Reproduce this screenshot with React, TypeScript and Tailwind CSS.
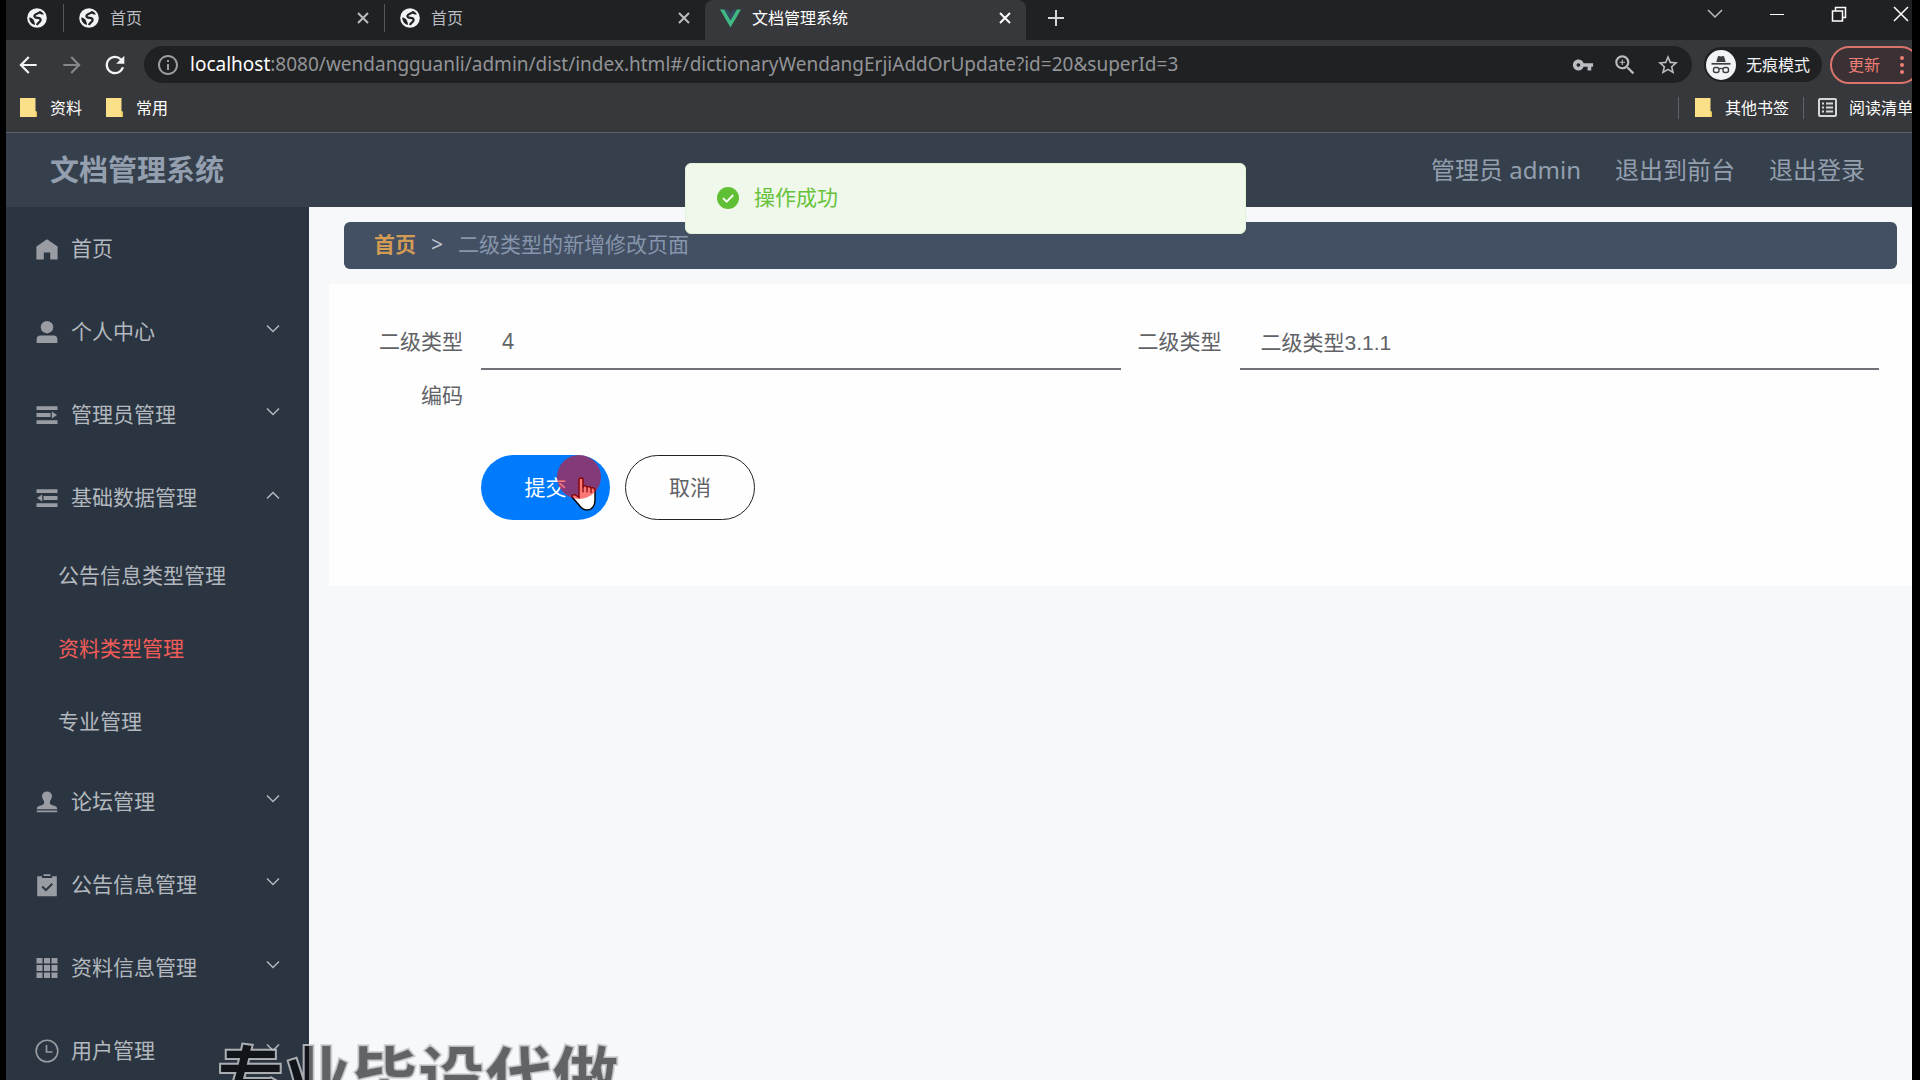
import type { ReactNode } from "react";
import {
  MdArrowBack,
  MdArrowForward,
  MdInfoOutline,
  MdRefresh,
  MdStarBorder,
  MdVpnKey,
  MdZoomIn,
} from "react-icons/md";

/* ---------- icons ---------- */

const MenuSvg = ({ children }: { children: ReactNode }) => (
  <svg viewBox="0 0 24 24" className="size-6 shrink-0" fill="currentColor" aria-hidden="true">
    {children}
  </svg>
);

const HomeIcon = () => (
  <MenuSvg>
    <path d="M12 2.2 22.6 9.6V22.6H15.2V15.4H8.8V22.6H1.4V9.6Z" />
  </MenuSvg>
);

const UserIcon = () => (
  <MenuSvg>
    <circle cx="12" cy="7.2" r="6.2" />
    <path d="M1.6 23V19.4A4 4 0 0 1 5.6 15.4H18.4A4 4 0 0 1 22.4 19.4V23Z" />
  </MenuSvg>
);

const UnfoldIcon = () => (
  <MenuSvg>
    <path d="M1.5 3.3h21v3.8h-21zM1.5 10.1h14v3.8h-14zM1.5 17.2h21v3.8h-21zM16.8 8.6 22 12l-5.2 3.4z" />
  </MenuSvg>
);

const FoldIcon = () => (
  <MenuSvg>
    <path d="M1.5 3.3h21v3.8h-21zM8.5 10.1h14v3.8h-14zM1.5 17.2h21v3.8h-21zM7.2 8.6 2 12l5.2 3.4z" />
  </MenuSvg>
);

const StampIcon = () => (
  <MenuSvg>
    <path d="M12 1.4a5 5 0 0 1 5 5c0 2.2-2.2 3.8-2.2 6.2 0 1.8 1.4 2.6 4.4 3.2 2.2.5 3 1.6 3 3.4H1.8c0-1.8.8-2.9 3-3.4 3-.6 4.4-1.4 4.4-3.2C9.200 10.2 7 8.6 7 6.4a5 5 0 0 1 5-5ZM1.8 20.600h20.4v1.700H1.800z" />
  </MenuSvg>
);

const ClaimIcon = () => (
  <MenuSvg>
    <path
      fillRule="evenodd"
      d="M8.5 3V1.2h7V3zM2.2 3.2h4.8V5h10V3.2h4.8V23.2H2.2zM10.9 18.6 18 11.5l-1.4-1.4-5.7 5.7-3-3-1.4 1.4z"
    />
  </MenuSvg>
);

const GridIcon = () => (
  <MenuSvg>
    <path d="M1.5 2h6v5.4h-6zM9 2h6v5.4H9zM16.5 2h6v5.4h-6zM1.5 9h6v6h-6zM9 9h6v6H9zM16.5 9h6v6h-6zM1.5 16.6h6V22h-6zM9 16.6h6V22H9zM16.5 16.6h6V22h-6z" />
  </MenuSvg>
);

const ClockIcon = () => (
  <MenuSvg>
    <circle cx="12" cy="12" r="10.8" fill="none" stroke="currentColor" strokeWidth="1.6" />
    <path d="M11.5 6v7h6" fill="none" stroke="currentColor" strokeWidth="1.6" />
  </MenuSvg>
);

const Chevron = ({ up }: { up?: boolean }) => (
  <svg viewBox="0 0 16 10" className="mb-[6px] h-[10px] w-4" fill="none" stroke="currentColor" strokeWidth="1.5" aria-hidden="true">
    <path d={up ? "M2 8.5 8 2.5l6 6" : "M2 1.5 8 7.5l6-6"} />
  </svg>
);

const Favicon = () => (
  <svg viewBox="0 0 20 20" className="size-5" fill="none" aria-hidden="true">
    <circle cx="10" cy="10" r="9.8" fill="#f1f3f4" />
    <path
      d="M13.5 3.500C12.500 5.500 8.500 5.500 7.500 7.500c-.6 1.600 1 2.200 3 2.300 2.200.1 3.700 1 3 2.900-.6 1.600-2.600 1.800-3.600 4.300"
      stroke="#202123"
      strokeWidth="2.200"
    />
    <path d="M2.200 9.500c2 0 4.300 1.300 4.800 3.200.3 1.400 1 2 1 4.300-3.500-.8-5.800-4-5.800-7.500Z" fill="#202123" />
    <path d="M12.500 3.200c2 .2 3.600 1.600 4.400 3.300-1.800.4-3.200-.2-4.600-1.300z" fill="#202123" />
  </svg>
);

const VueIcon = () => (
  <svg viewBox="0 0 22 19" className="h-[19px] w-[21px]" aria-hidden="true">
    <path d="M0 0h4.5L11 11.4 17.5 0H22L11 19Z" fill="#41b883" />
    <path d="M4.5 0h4L11 4.4 13.5 0h4L11 11.4Z" fill="#35495e" />
  </svg>
);

const CloseIcon = () => (
  <svg viewBox="0 0 12 12" className="size-3" fill="none" stroke="currentColor" strokeWidth="2" aria-hidden="true">
    <path d="M1 1l10 10M11 1 1 11" />
  </svg>
);

const FolderIcon = () => (
  <svg viewBox="0 0 17 19" className="h-[19px] w-[17px]" aria-hidden="true">
    <path d="M0 0h15.5v13l1.5 1v5H0z" fill="#fbe08a" />
    <path d="M15.5 13v6H17v-5z" fill="#e8c455" />
  </svg>
);

const IncognitoIcon = () => (
  <svg viewBox="0 0 30 30" className="size-[30px]" fill="none" aria-hidden="true">
    <circle cx="15" cy="15" r="15" fill="#f1f3f4" />
    <path d="M10.3 12 11.800 6.800c.2-.7.8-1 1.4-.8l1.800.4 1.800-.4c.6-.2 1.200.1 1.400.8L19.700 12z" fill="#3c4043" />
    <path d="M5.500 13.800h19" stroke="#3c4043" strokeWidth="1.700" />
    <rect x="7.500" y="17.500" width="5.500" height="5" rx="2" stroke="#3c4043" strokeWidth="1.400" />
    <rect x="17" y="17.500" width="5.500" height="5" rx="2" stroke="#3c4043" strokeWidth="1.400" />
    <path d="M13 19c1.200-.7 2.800-.7 4 0" stroke="#3c4043" strokeWidth="1.300" />
  </svg>
);

const ReadingListIcon = () => (
  <svg viewBox="0 0 19 19" className="size-[19px]" fill="none" stroke="#d5d7da" strokeWidth="2" aria-hidden="true">
    <rect x="1" y="1" width="17" height="17" rx="1" />
    <path d="M4 5.500h2M4 9.500h2M4 13.500h2M8 5.500h7M8 9.500h7M8 13.500h7" />
  </svg>
);

const HandCursor = () => (
  <svg viewBox="0 0 26 34" className="absolute top-[22px] left-[90px] h-[34px] w-[26px]" aria-hidden="true">
    <path
      d="M8 2.500c0-2 4-2 4 0V9.500c1-1 3.500-.8 4 .7 1-1 3.500-.6 4 .9 1-.8 4-.4 4 1.900V23c0 5-2.500 10-8 10-4 0-6-2-8-5L1.500 20.500c-1-2 1-3.500 3-2.500L8 20.500z"
      fill="#fff"
      stroke="#000"
      strokeWidth="1.400"
    />
    <path d="M12 9.500v6M16 10.500v5M20 11.500v4.500" stroke="#000" strokeWidth="1.200" />
  </svg>
);

/* ---------- browser window ---------- */

const Tab = ({ title, icon, active }: { title: string; icon: ReactNode; active?: boolean }) => (
  <div
    className={
      active
        ? "flex h-10 w-[321px] items-center rounded-t-lg bg-[#37383b] px-[15px] pb-1 text-white"
        : "flex h-10 w-[320px] items-center px-[15px] pb-1 text-[#b9bcc0]"
    }
  >
    {icon}
    <span className="flex-1 pl-[11px]">{title}</span>
    <button aria-label="关闭标签页">
      <CloseIcon />
    </button>
  </div>
);

const TabDivider = () => <div className="mt-1 h-7 w-px bg-[#55585c]" />;

const TabStrip = () => (
  <div className="flex h-10 bg-[#202123]">
    <div className="flex w-[57px] items-center justify-end pr-4 pb-1">
      <Favicon />
    </div>
    <TabDivider />
    <Tab title="首页" icon={<Favicon />} />
    <TabDivider />
    <Tab title="首页" icon={<Favicon />} />
    <Tab title="文档管理系统" icon={<VueIcon />} active />
    <button aria-label="新标签页" className="ml-[21px] pb-1 text-[#d5d7da]">
      <svg viewBox="0 0 18 18" className="size-[18px]" fill="none" stroke="currentColor" strokeWidth="2">
        <path d="M9 1v16M1 9h16" />
      </svg>
    </button>
    <div className="ml-auto flex h-7 items-center gap-[46px] pr-[3px] text-white">
      <button aria-label="搜索标签页">
        <svg viewBox="0 0 16 10" className="h-[10px] w-4 text-[#b9bcc0]" fill="none" stroke="currentColor" strokeWidth="1.5">
          <path d="M1 1l7 7 7-7" />
        </svg>
      </button>
      <button aria-label="最小化">
        <svg viewBox="0 0 16 16" className="size-4" fill="none" stroke="currentColor">
          <path d="M1 8.5h14" />
        </svg>
      </button>
      <button aria-label="还原">
        <svg viewBox="0 0 16 16" className="size-4" fill="none" stroke="currentColor" strokeWidth="1.5">
          <path d="M1.5 5h10v10h-10zM4.5 4.5V1.500h10v10h-3" />
        </svg>
      </button>
      <button aria-label="关闭">
        <svg viewBox="0 0 16 16" className="size-4" fill="none" stroke="currentColor" strokeWidth="1.5">
          <path d="M1 1l14 14M15 1 1 15" />
        </svg>
      </button>
    </div>
  </div>
);

const Toolbar = () => (
  <div className="flex h-[49px] items-center pl-[9px] text-[#f1f3f4]">
    <button aria-label="后退">
      <MdArrowBack className="size-[26px]" />
    </button>
    <button aria-label="前进" className="ml-[18px] text-[#85878a]">
      <MdArrowForward className="size-[26px]" />
    </button>
    <button aria-label="重新加载" className="ml-4">
      <MdRefresh className="size-7" />
    </button>
    <div className="ml-[15px] flex h-[37px] flex-1 items-center rounded-full bg-[#202123] px-3 text-[#b9bcc0]">
      <MdInfoOutline className="size-6 text-[#9a9da1]" />
      <div role="textbox" aria-label="地址栏" className="ml-[10px] flex-1 text-[19px] whitespace-nowrap text-[#929497]">
        <span className="text-white">localhost</span>
        :8080/wendangguanli/admin/dist/index.html#/dictionaryWendangErjiAddOrUpdate?id=20&amp;superId=3
      </div>
      <div className="flex items-center gap-[18px]">
        <MdVpnKey className="size-[22px]" />
        <MdZoomIn className="size-[26px]" />
        <MdStarBorder className="size-6" />
      </div>
    </div>
    <button className="ml-3 flex h-[35px] items-center gap-[10px] rounded-full bg-[#202123] pr-3 pl-[2px]">
      <IncognitoIcon />
      无痕模式
    </button>
    <button className="-mr-2 ml-2 flex h-[38px] items-center gap-5 rounded-full border-2 border-[#d9756d] bg-[#3b3033] pr-[14px] pl-4 text-[#ee7f77]">
      更新
      <svg viewBox="0 0 4 18" className="h-[18px] w-1" fill="currentColor">
        <circle cx="2" cy="2" r="2" />
        <circle cx="2" cy="9" r="2" />
        <circle cx="2" cy="16" r="2" />
      </svg>
    </button>
  </div>
);

const BookmarkBar = () => (
  <div className="flex h-11 items-center border-b border-[#5b5f64] pb-[6px] pl-[14px] whitespace-nowrap text-white">
    <a href="#docs" className="flex items-center gap-[13px]">
      <FolderIcon />
      资料
    </a>
    <a href="#common" className="ml-6 flex items-center gap-[13px]">
      <FolderIcon />
      常用
    </a>
    <div className="-mr-px ml-auto flex items-center">
      <div className="mr-4 h-[22px] w-px bg-[#606368]" />
      <a href="#other" className="flex items-center gap-[13px]">
        <FolderIcon />
        其他书签
      </a>
      <div className="mx-[14px] h-[22px] w-px bg-[#606368]" />
      <button className="flex items-center gap-3">
        <ReadingListIcon />
        阅读清单
      </button>
    </div>
  </div>
);

/* ---------- admin page ---------- */

const Header = () => (
  <header className="flex h-[74px] items-center justify-between bg-[#36404c] pr-[47px] pl-11 text-2xl text-[#939fae]">
    <h1 className="text-[29px] font-bold">文档管理系统</h1>
    <div className="flex items-center gap-[34px]">
      <span>管理员 admin</span>
      <a href="#front">退出到前台</a>
      <a href="#logout">退出登录</a>
    </div>
  </header>
);

type MenuEntry = {
  title: string;
  icon: ReactNode;
  link?: boolean;
  children?: { title: string; active?: boolean }[];
};

const menu: MenuEntry[] = [
  { title: "首页", icon: <HomeIcon />, link: true },
  { title: "个人中心", icon: <UserIcon /> },
  { title: "管理员管理", icon: <UnfoldIcon /> },
  {
    title: "基础数据管理",
    icon: <FoldIcon />,
    children: [
      { title: "公告信息类型管理" },
      { title: "资料类型管理", active: true },
      { title: "专业管理" },
    ],
  },
  { title: "论坛管理", icon: <StampIcon /> },
  { title: "公告信息管理", icon: <ClaimIcon /> },
  { title: "资料信息管理", icon: <GridIcon /> },
  { title: "用户管理", icon: <ClockIcon /> },
];

const Sidebar = () => (
  <nav className="w-[303px] shrink-0 bg-[#2b3541] text-[21px] text-[#b3b8be]">
    <ul>
      {menu.map((item) => (
        <li key={item.title}>
          {item.link ? (
            <a href="#home" className="flex h-[83px] items-center gap-3 pl-[29px]">
              <span className="text-[#999ca3]">{item.icon}</span>
              {item.title}
            </a>
          ) : (
            <button className="flex h-[83px] w-full items-center gap-3 pr-7 pl-[29px]">
              <span className="text-[#999ca3]">{item.icon}</span>
              <span className="flex-1 text-left">{item.title}</span>
              <Chevron up={!!item.children} />
            </button>
          )}
          {item.children && (
            <ul className="pb-[2px]">
              {item.children.map((child) => (
                <li key={child.title}>
                  <a
                    href="#type"
                    className={
                      child.active
                        ? "flex h-[73px] items-center pl-[52px] text-[#f25c58]"
                        : "flex h-[73px] items-center pl-[52px]"
                    }
                  >
                    {child.title}
                  </a>
                </li>
              ))}
            </ul>
          )}
        </li>
      ))}
    </ul>
  </nav>
);

const Breadcrumb = () => (
  <div className="mx-[15px] flex h-[47px] items-center gap-[15px] rounded-md bg-[#435064] px-[30px] pb-[2px] text-[21px] text-[#8695ab]">
    <a href="#home" className="font-bold text-[#d39c55]">
      首页
    </a>
    <span className="text-[#c0c4cc]">&gt;</span>
    <span>二级类型的新增修改页面</span>
  </div>
);

const TypeForm = () => (
  <form className="bg-[#fefefe] px-[33px] pt-[30px] pb-[66px] text-[21px] text-[#606266]">
    <div className="grid grid-cols-2">
      <div className="flex items-start">
        <label htmlFor="code" className="w-[119px] shrink-0 pr-[18px] text-right leading-[54px]">
          二级类型编码
        </label>
        <input id="code" defaultValue="4" className="h-14 min-w-0 flex-1 border-b-2 border-[#707277] px-[21px]" />
      </div>
      <div className="flex items-start">
        <label htmlFor="name" className="w-[119px] shrink-0 pr-[18px] text-right leading-[54px]">
          二级类型
        </label>
        <input
          id="name"
          defaultValue="二级类型3.1.1"
          className="h-14 min-w-0 flex-1 border-b-2 border-[#707277] px-[21px] font-['Liberation_Sans','Noto_Sans_CJK_SC',sans-serif]"
        />
      </div>
    </div>
    <div className="mt-[33px] flex gap-[15px] pl-[119px]">
      <div className="relative">
        <button type="button" className="h-[65px] w-[129px] rounded-full bg-[#017bfe] text-white">
          提交
        </button>
        <HandCursor />
        <div className="absolute top-0 left-[76px] size-11 rounded-full bg-[#f70000]/53" />
      </div>
      <button type="button" className="h-[65px] w-[130px] rounded-full border border-[#222222]">
        取消
      </button>
    </div>
  </form>
);

const Toast = () => (
  <div
    role="alert"
    className="absolute top-[30px] left-[679px] flex h-[71px] w-[561px] items-center gap-[15px] rounded-md border border-[#e1f3d8] bg-[#eff8ea] px-[31px] pb-[2px] text-[21px] text-[#67c23a]"
  >
    <svg viewBox="0 0 22 22" className="size-[22px]" fill="none" aria-hidden="true">
      <circle cx="11" cy="11" r="11" fill="#5fc035" />
      <path d="M6 11.2 9.7 14.7 16.2 8" stroke="#fff" strokeWidth="1.8" />
    </svg>
    操作成功
  </div>
);

export default function App() {
  return (
    <div className="h-screen bg-black pr-2 pl-[6px] font-['Noto_Sans','Noto_Sans_CJK_SC',sans-serif] text-base">
      <div className="relative flex h-full flex-col overflow-hidden bg-[#37383b]">
        <TabStrip />
        <Toolbar />
        <BookmarkBar />
        <div className="relative flex min-h-0 flex-1 flex-col bg-[#f6f8fa]">
          <Header />
          <div className="flex min-h-0 flex-1">
            <Sidebar />
            <main className="min-w-0 flex-1 pt-[15px] pl-5">
              <Breadcrumb />
              <div className="mt-[15px]">
                <TypeForm />
              </div>
            </main>
          </div>
          <Toast />
        </div>
        <div className="absolute -bottom-8 left-[211px] text-[67px] leading-[72px] font-black whitespace-nowrap text-black/60 [-webkit-text-stroke:2px_rgba(205,207,210,0.8)]">
          专业毕设代做
        </div>
      </div>
    </div>
  );
}
